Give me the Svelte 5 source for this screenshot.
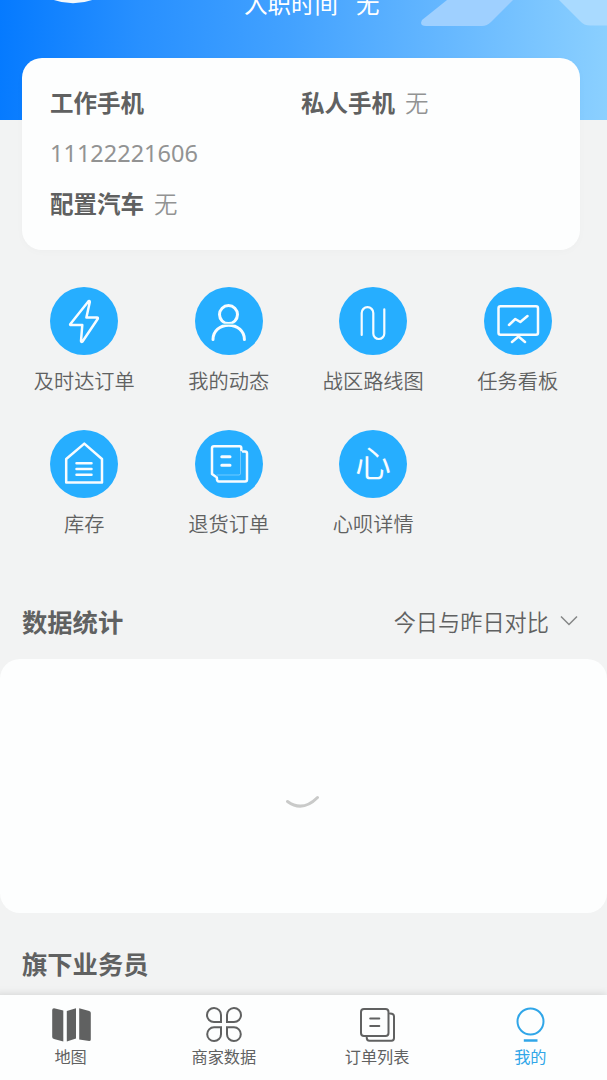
<script>
  let activeTab = 'mine';

  const profile = {
    joined: '无',
    workPhone: '11122221606',
    privatePhone: '无',
    car: '无'
  };

  const shortcuts = [
    { id: 'instant', label: '及时达订单' },
    { id: 'moments', label: '我的动态' },
    { id: 'route', label: '战区路线图' },
    { id: 'board', label: '任务看板' },
    { id: 'stock', label: '库存' },
    { id: 'refund', label: '退货订单' },
    { id: 'heart', label: '心呗详情' }
  ];

  const tabs = [
    { id: 'map', label: '地图' },
    { id: 'shops', label: '商家数据' },
    { id: 'orders', label: '订单列表' },
    { id: 'mine', label: '我的' }
  ];
</script>

<div class="page">
  <header class="banner">
    <svg class="banner-art" viewBox="0 0 607 120">
      <circle cx="73" cy="-54" r="57.3" fill="#f4f8fb" />
      <path d="M447 0L422 20Q419 26 426 26H482Q487 26 491 22L513 0Z" fill="#9fd0ff" />
      <path d="M559 0L580 21Q584 25.500 590 25.500H607V0Z" fill="#a9daff" />
    </svg>
    <div class="joined">
      <span>入职时间</span>
      <span>{profile.joined}</span>
    </div>
  </header>

  <section class="profile-card">
    <div class="field">
      <span class="name">工作手机</span>
      <span class="value phone">{profile.workPhone}</span>
    </div>
    <div class="field">
      <span class="name">私人手机</span>
      <span class="value">{profile.privatePhone}</span>
    </div>
    <div class="field">
      <span class="name">配置汽车</span>
      <span class="value">{profile.car}</span>
    </div>
  </section>

  <section class="shortcuts">
    {#each shortcuts as item (item.id)}
      <div class="shortcut">
        <svg class="shortcut-icon" viewBox="0 0 68 68">
          <circle class="disc" cx="34" cy="34" r="34" />
          {#if item.id === 'instant'}
            <path d="M38.500 14.200L20.200 37.200Q19.800 38 21 38H32.300L31 54Q31.300 55.500 32.500 54.500L47.800 31.700Q48.200 30.500 47 30.500H36.400L39.800 15Q39.800 13.500 38.500 14.200Z" />
          {:else if item.id === 'moments'}
            <circle class="heavy" cx="33.500" cy="27.600" r="9" />
            <path class="heavy" d="M18 52.500C18 44 25 38.300 33.700 38.300S49.400 44 49.400 52.500" />
            <path class="seam" d="M28 37.200H39.500" />
          {:else if item.id === 'route'}
            <path class="thin" d="M22.700 48V26a5.800 5.800 0 0 1 11.600 0V46.500a5.500 5.500 0 0 0 11 0V22.300" />
          {:else if item.id === 'board'}
            <rect x="14.500" y="19.200" width="39.500" height="28.500" rx="2" />
            <path d="M25 38L31.300 32L36.300 35L43.500 29M34.500 49.500L28 55M34.500 49.500L41 55" />
          {:else if item.id === 'stock'}
            <path d="M34.300 13.600L16.200 29V52.500H52V29Z" />
            <path d="M26.500 33.300H41.500M26.500 39H41.500M26.500 44.700H41.500" />
          {:else if item.id === 'refund'}
            <path d="M20.500 46.500L17 44V18Q17 16.200 19 16.200H44.500Q46.300 16.200 46.300 18V20" />
            <path class="hair" d="M45.500 21V43.500Q45.500 45 44 45H22" />
            <path d="M48 21.500H50Q52 21.500 52 23.500V49.500Q52 51.500 50 51.500H24Q21.800 51.500 21.800 47.500" />
            <path class="heavy" d="M26.800 26.800H35M26.800 35.300H35" />
          {:else}
            <text x="34" y="46.500" text-anchor="middle">心</text>
          {/if}
        </svg>
        <span class="shortcut-label">{item.label}</span>
      </div>
    {/each}
  </section>

  <section class="stats">
    <div class="stats-head">
      <h2>数据统计</h2>
      <div class="range">
        <span>今日与昨日对比</span>
        <svg width="18" height="12" viewBox="0 0 18 12">
          <path d="M1 1.500L9 9.500L17 1.500" fill="none" stroke="#858686" stroke-width="1.500" />
        </svg>
      </div>
    </div>
    <div class="stats-body">
      <svg class="loader" width="40" height="40" viewBox="0 0 40 40">
        <path d="M4.500 30.500Q19.500 41.500 34.500 26.500" fill="none" stroke="#c9cac9" stroke-width="3" stroke-linecap="round" />
      </svg>
    </div>
  </section>

  <section class="team">
    <h2>旗下业务员</h2>
  </section>

  <nav class="tabbar">
    {#each tabs as tab (tab.id)}
      <button class="tab" class:active={activeTab === tab.id} on:click={() => (activeTab = tab.id)}>
        <svg width="40" height="38" viewBox="0 0 40 38">
          {#if tab.id === 'map'}
            <g class="solid">
              <path d="M3 2.300L12.300 4.500V35.500L3 33Q1.200 32.500 1.200 31V4Q1.200 2.300 3 2.300Z" />
              <path d="M15.800 5L25 2.300V32.500L15.800 35.500Z" />
              <path d="M28.200 2.300L38.200 5Q39.800 5.500 39.800 7V33.500Q39.800 35 38.200 35L28.200 33.500Z" />
            </g>
          {:else if tab.id === 'shops'}
            <path d="M17 16V9.200A7 7 0 1 0 10 16ZM23 16V9.200A7 7 0 1 1 30 16ZM17 21.300H10A6.900 6.900 0 1 0 17 28.200ZM23 21.300H30A6.900 6.900 0 1 1 23 28.200Z" />
          {:else if tab.id === 'orders'}
            <rect x="4" y="3" width="27.500" height="27" rx="3" />
            <path d="M33 7.500Q37 7.500 37 10.500V32Q37 34.700 34.500 34.700H12.500Q9.700 34.700 9.700 31.500" />
            <path d="M13.200 12.600H22.300M13.200 20H22.300" />
          {:else}
            <circle cx="20.500" cy="15.500" r="13" />
            <path class="base" d="M13.800 34.500H27.500" />
          {/if}
        </svg>
        <span>{tab.label}</span>
      </button>
    {/each}
  </nav>
</div>

<style>
  :global(body) {
    background: #f2f3f3;
  }

  .page {
    height: 1080px;
    overflow: hidden;
    display: flex;
    flex-direction: column;
    background: #f2f3f3;
    color: #606161;
    font-family: "Noto Sans CJK SC", sans-serif;
  }

  .banner {
    position: relative;
    flex: none;
    height: 120px;
    overflow: hidden;
    background: linear-gradient(92deg, #057aff 0%, #2890ff 23%, #43a2ff 48%, #6bbbff 77%, #8bd0ff 100%);
  }

  .banner-art {
    position: absolute;
    inset: 0;
    width: 607px;
    height: 120px;
  }

  .joined {
    position: relative;
    display: flex;
    gap: 18px;
    margin: -15px 0 0 244px;
    color: #fff;
    font-size: 23.5px;
    line-height: 36px;
  }

  .profile-card {
    position: relative;
    flex: none;
    display: grid;
    grid-template-columns: 251px 1fr;
    align-content: start;
    height: 192px;
    margin: -62px 27px 0 22px;
    padding: 19px 28px 0;
    box-sizing: border-box;
    border-radius: 20px;
    background: #fdfefe;
    box-shadow: 0 2px 8px rgba(0, 0, 0, 0.02);
    font-size: 23.5px;
    line-height: 50.5px;
  }

  .field {
    display: flex;
    flex-wrap: wrap;
    align-content: flex-start;
    column-gap: 10px;
  }

  .name {
    font-weight: 700;
  }

  .value {
    color: #929393;
    font-weight: 350;
  }

  .phone {
    width: 100%;
    font-family: "Noto Sans", sans-serif;
    font-weight: 400;
  }

  .shortcuts {
    flex: none;
    display: grid;
    grid-template-columns: repeat(4, 1fr);
    grid-auto-rows: 143px;
    margin: 37px 17px 0 12px;
  }

  .shortcut {
    display: flex;
    flex-direction: column;
    align-items: center;
  }

  .shortcut-icon {
    width: 68px;
    height: 68px;
    fill: none;
    stroke: #f7fcff;
    stroke-width: 2.5;
    stroke-linecap: round;
    stroke-linejoin: round;
  }

  .shortcut-icon .disc {
    fill: #26aeff;
    stroke: none;
  }

  .shortcut-icon .thin {
    stroke-width: 2.2;
  }

  .shortcut-icon .heavy {
    stroke-width: 3;
  }

  .shortcut-icon .hair {
    stroke-width: 0.5;
    opacity: 0.7;
  }

  .shortcut-icon .seam {
    stroke: #4fc4ef;
    stroke-width: 1;
  }

  .shortcut-icon text {
    fill: #f7fcff;
    stroke: none;
    font-size: 36px;
    font-weight: 350;
  }

  .shortcut-label {
    margin-top: 11px;
    font-size: 20.2px;
    font-weight: 350;
    line-height: 29px;
    white-space: nowrap;
  }

  .stats-head {
    display: flex;
    align-items: center;
    justify-content: space-between;
    height: 72px;
    margin-top: 12px;
    padding: 0 29px 2px 22px;
  }

  h2 {
    margin: 0;
    font-size: 25.3px;
    font-weight: 700;
    line-height: 38px;
  }

  .range {
    display: flex;
    align-items: center;
    gap: 11px;
    font-size: 22.2px;
    font-weight: 350;
    line-height: 34px;
  }

  .stats-body {
    display: flex;
    align-items: center;
    justify-content: center;
    height: 254px;
    border-radius: 20px;
    background: #fdfefe;
  }

  .loader {
    margin: 10px 2px 0 0;
  }

  .team {
    flex: 1;
    padding: 31px 22px 0;
  }

  .tabbar {
    position: relative;
    flex: none;
    display: grid;
    grid-template-columns: repeat(4, 1fr);
    height: 85px;
    margin-left: -6px;
    background: #fdfefe;
    box-shadow: 0 -1px 8px rgba(0, 0, 0, 0.12);
  }

  .tab {
    display: flex;
    flex-direction: column;
    align-items: center;
    padding: 11px 0 0;
    border: none;
    background: none;
    color: #606161;
    font-family: inherit;
    font-size: 16.2px;
    line-height: 25px;
    cursor: pointer;
  }

  .tab svg {
    flex: none;
    fill: none;
    stroke: currentColor;
    stroke-width: 2;
    stroke-linecap: round;
  }

  .tab .solid {
    fill: currentColor;
    stroke: none;
  }

  .tab .base {
    stroke-width: 2.5;
    stroke-linecap: butt;
  }

  .tab.active {
    color: #30a6e8;
  }
</style>
